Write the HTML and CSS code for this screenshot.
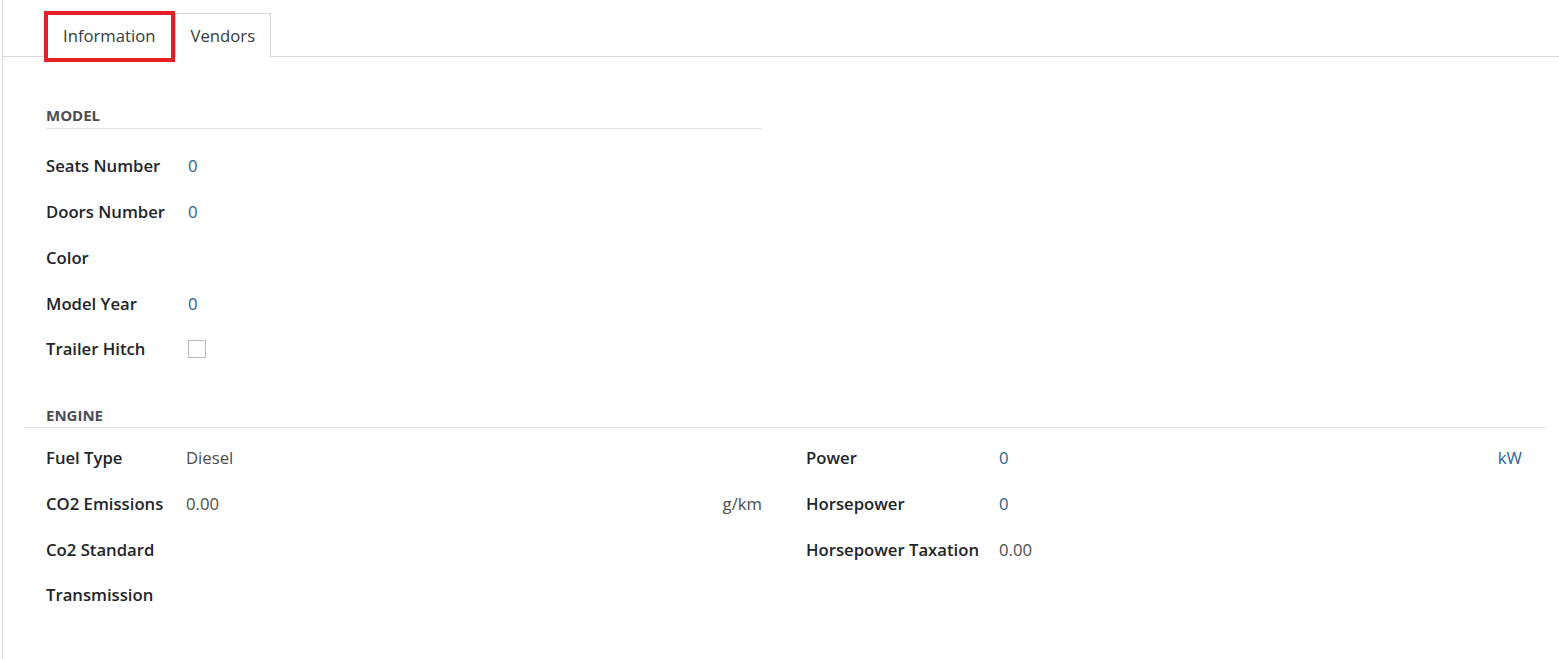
FILE: index.html
```html
<!DOCTYPE html>
<html lang="en">
<head>
    <meta charset="UTF-8">
    <title>Vehicle Model</title>
    <link rel="stylesheet" href="styles.css">
</head>
<body>
    <div class="page">
        <!-- Tabs -->
        <ul class="tabs">
            <li class="tab active">Information</li>
            <li class="tab">Vendors</li>
        </ul>

        <div class="sheet">
            <!-- Model -->
            <div class="group half">
                <div class="separator">MODEL</div>
                <div class="row model"><span class="label">Seats Number</span><span class="value num">0</span></div>
                <div class="row model"><span class="label">Doors Number</span><span class="value num">0</span></div>
                <div class="row model"><span class="label">Color</span><span class="value"></span></div>
                <div class="row model"><span class="label">Model Year</span><span class="value num">0</span></div>
                <div class="row model"><span class="label">Trailer Hitch</span><span class="value"><span class="checkbox"></span></span></div>
            </div>

            <!-- Engine -->
            <div class="separator wide">ENGINE</div>
            <div class="columns">
                <div class="group">
                    <div class="row eng-left"><span class="label">Fuel Type</span><span class="value">Diesel</span></div>
                    <div class="row eng-left"><span class="label">CO2 Emissions</span><span class="value">0.00</span><span class="unit">g/km</span></div>
                    <div class="row eng-left"><span class="label">Co2 Standard</span><span class="value"></span></div>
                    <div class="row eng-left"><span class="label">Transmission</span><span class="value"></span></div>
                </div>
                <div class="group">
                    <div class="row eng-right"><span class="label">Power</span><span class="value num">0</span><span class="unit num">kW</span></div>
                    <div class="row eng-right"><span class="label">Horsepower</span><span class="value num">0</span></div>
                    <div class="row eng-right"><span class="label">Horsepower Taxation</span><span class="value">0.00</span></div>
                </div>
            </div>
        </div>
    </div>
</body>
</html>
```

FILE: styles.css
```css
body {
    margin: 0;
    font-family: "Open Sans", "Noto Sans", sans-serif;
    font-size: 16.7px;
    color: #212529;
    background: white;
}

.page {
    margin-left: 2px;
    border-left: 1px solid #d8d8d8;
    min-height: 659px;
}

.tabs {
    list-style: none;
    margin: 0;
    padding: 13px 0 0 41px;
    display: flex;
    align-items: flex-start;
    border-bottom: 1px solid #d5d5d8;
}

.tab {
    line-height: 23px;
    padding: 10px 15px;
    color: #343a40;
    border: 1px solid #d5d5d8;
    border-bottom: none;
    margin-bottom: -1px;
    background: white;
}

.tab.active {
    border: 4px solid #e41f26;
    margin-top: -2px;
    margin-bottom: -6px;
    padding: 9px 15px 11px;
}

.sheet {
    padding: 48px 13px 0 21px;
}

.group.half {
    width: 760px;
}

.columns {
    display: flex;
}

.columns .group {
    width: 760px;
}

.group {
    padding: 0 22px;
    box-sizing: border-box;
}

.separator {
    font-size: 15px;
    line-height: 20px;
    font-weight: 700;
    color: #4c4c55;
    padding-bottom: 3px;
    border-bottom: 1px solid #e2e2e2;
    margin-bottom: 14px;
}

.separator.wide {
    margin-top: 33px;
    padding-left: 22px;
    padding-bottom: 2px;
    margin-bottom: 7px;
}

.row {
    display: flex;
    align-items: center;
    height: 45.75px;
}

.label {
    font-weight: 600;
    flex: none;
}

.value {
    color: #4c4c4c;
    flex: 1;
}

.unit {
    color: #4c4c4c;
}

.num {
    color: #2d6193;
}

.model .label {
    width: 142px;
}

.eng-left .label {
    width: 140px;
}

.eng-right .label {
    width: 193px;
}

.checkbox {
    display: block;
    width: 16px;
    height: 16px;
    border: 1px solid #bbbbbb;
}
```
